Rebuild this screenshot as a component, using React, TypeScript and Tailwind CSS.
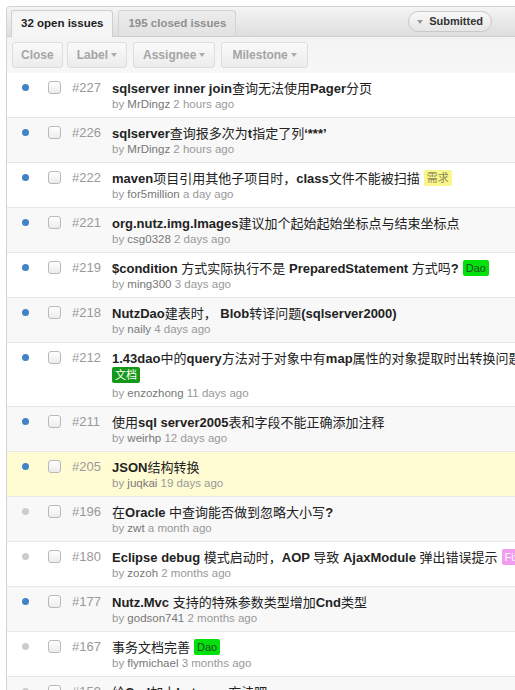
import React from 'react';

type Label = { text: string; cls: string };
type Issue = {
  num: number;
  title: string;
  author: string;
  when: string;
  open?: boolean;
  label?: Label;
  labelBelow?: boolean;
  highlight?: boolean;
};

const yellow = 'bg-[#fbf68b] text-[#8a8a5a]';
const lime = 'bg-[#02e10c] text-[#1f4f1f]';
const green = 'bg-[#159818] text-white';
const pink = 'bg-[#f29cf0] text-white';

const issues: Issue[] = [
  { num: 227, title: 'sqlserver inner join查询无法使用Pager分页', author: 'MrDingz', when: '2 hours ago', open: true },
  { num: 226, title: 'sqlserver查询报多次为t指定了列‘***’', author: 'MrDingz', when: '2 hours ago', open: true },
  { num: 222, title: 'maven项目引用其他子项目时，class文件不能被扫描', author: 'for5million', when: 'a day ago', open: true, label: { text: '需求', cls: yellow } },
  { num: 221, title: 'org.nutz.img.Images建议加个起始起始坐标点与结束坐标点', author: 'csg0328', when: '2 days ago', open: true },
  { num: 219, title: '$condition 方式实际执行不是 PreparedStatement 方式吗?', author: 'ming300', when: '3 days ago', open: true, label: { text: 'Dao', cls: lime } },
  { num: 218, title: 'NutzDao建表时， Blob转译问题(sqlserver2000)', author: 'naily', when: '4 days ago', open: true },
  { num: 212, title: '1.43dao中的query方法对于对象中有map属性的对象提取时出转换问题', author: 'enzozhong', when: '11 days ago', open: true, label: { text: '文档', cls: green }, labelBelow: true },
  { num: 211, title: '使用sql server2005表和字段不能正确添加注释', author: 'weirhp', when: '12 days ago', open: true },
  { num: 205, title: 'JSON结构转换', author: 'juqkai', when: '19 days ago', open: true, highlight: true },
  { num: 196, title: '在Oracle 中查询能否做到忽略大小写?', author: 'zwt', when: 'a month ago' },
  { num: 180, title: 'Eclipse debug 模式启动时，AOP 导致 AjaxModule 弹出错误提示', author: 'zozoh', when: '2 months ago', label: { text: 'Fixed', cls: pink } },
  { num: 177, title: 'Nutz.Mvc 支持的特殊参数类型增加Cnd类型', author: 'godson741', when: '2 months ago', open: true },
  { num: 167, title: '事务文档完善', author: 'flymichael', when: '3 months ago', label: { text: 'Dao', cls: lime } },
  { num: 159, title: '给Cnd加上between方法吧', author: 'wendal', when: '3 months ago' },
];

const font = { fontFamily: '"Liberation Sans", "Noto Sans CJK SC", sans-serif' };

// latin runs are bold, CJK runs fall back to a regular face like the original
function Title({ text }: { text: string }) {
  const parts = text.split(/([\u3000-\u303f\u4e00-\u9fff\uff00-\uffef]+)/).filter(Boolean);
  return (
    <>
      {parts.map((p, i) =>
        /[\u3000-\u303f\u4e00-\u9fff\uff00-\uffef]/.test(p) ? (
          <span key={i} className="font-normal text-[13px]">{p}</span>
        ) : (
          <span key={i} className="font-bold text-[13px]">{p}</span>
        )
      )}
    </>
  );
}

function Tag({ label }: { label: Label }) {
  return (
    <span className={`ml-[4px] px-[3px] rounded-[2px] text-[11px] leading-[16px] h-[16px] font-normal ${label.cls}`}>
      {label.text}
    </span>
  );
}

function Caret() {
  return <span className="inline-block ml-[3px] border-x-[3px] border-x-transparent border-t-[4px] border-t-[#aaa]" />;
}

function ToolButton({ children, className = '' }: { children: React.ReactNode; className?: string }) {
  return (
    <div className={`h-[26px] flex items-center rounded-[3px] border border-[#ddd] bg-gradient-to-b from-[#fafafa] to-[#ececec] text-[12px] font-bold text-[#a5a5a5] ${className}`}>
      {children}
    </div>
  );
}

function Row({ issue, index }: { issue: Issue; index: number }) {
  const bg = issue.highlight ? 'bg-[#fffcd3]' : index % 2 === 1 ? 'bg-[#f8f8f8]' : 'bg-white';
  return (
    <div className={`flex border-b border-[#e6e6e6] pt-[6px] pb-[4px] ${bg}`}>
      <div className="w-[36px] h-[17px] flex items-center pl-[15px]">
        <span className={`w-[7px] h-[7px] rounded-full ${issue.open ? 'bg-[#4183c4]' : 'bg-[#cccccc]'}`} />
      </div>
      <div className="w-[29px] h-[17px] flex items-center pl-[5px]">
        <span className="w-[13px] h-[13px] rounded-[3px] border border-[#b9b9b9] bg-gradient-to-b from-white to-[#ececec]" />
      </div>
      <div className="w-[40px] h-[17px] flex items-center text-[13px] text-[#999]">#{issue.num}</div>
      <div className="flex-1 min-w-0">
        <div className="h-[17px] flex items-center whitespace-nowrap text-[#222]">
          <span className="leading-[17px]">
            <Title text={issue.title} />
          </span>
          {issue.label && !issue.labelBelow && <Tag label={issue.label} />}
        </div>
        {issue.label && issue.labelBelow && (
          <div className="h-[19px] flex items-start pt-[1px]">
            <span className={`px-[3px] rounded-[2px] text-[11px] leading-[16px] h-[16px] ${issue.label.cls}`}>{issue.label.text}</span>
          </div>
        )}
        <div className="h-[17px] leading-[17px] text-[11.5px] text-[#999] whitespace-nowrap">
          by <span className="text-[#777]">{issue.author}</span> {issue.when}
        </div>
      </div>
    </div>
  );
}

export default function App() {
  return (
    <div className="w-[515px] h-[690px] overflow-hidden bg-white pt-[6px] pl-[6px]" style={font}>
      <div className="w-[620px] border-l border-t border-[#d3d3d3] rounded-tl-[4px] overflow-hidden">
        <div className="h-[30px] flex items-end pl-[4px] bg-gradient-to-b from-[#f4f4f4] to-[#dedede] border-b border-[#cfcfcf] w-[509px]">
          <div className="h-[27px] -mb-px px-[9px] flex items-center rounded-t-[3px] border border-b-0 border-[#cfcfcf] bg-[#f5f5f5] text-[11.5px] font-bold text-[#222]">
            32 open issues
          </div>
          <div className="h-[26px] ml-[5px] px-[9px] flex items-center rounded-t-[3px] border border-b-0 border-[#d3d3d3] bg-gradient-to-b from-[#ececec] to-[#e2e2e2] text-[11.5px] font-bold text-[#909090]">
            195 closed issues
          </div>
          <div className="ml-auto mr-[24px] mb-[4px] h-[21px] px-[8px] flex items-center gap-[6px] rounded-full border border-[#c8c8c8] bg-gradient-to-b from-[#f8f8f8] to-[#e6e6e6] text-[11px] font-bold text-[#333]">
            <span className="inline-block border-x-[3px] border-x-transparent border-t-[4px] border-t-[#999]" />
            Submitted
          </div>
        </div>
        <div className="h-[36px] flex items-center pl-[5px] bg-gradient-to-b from-[#f3f3f3] to-[#f7f7f7]">
          <ToolButton className="px-[8px]">Close</ToolButton>
          <ToolButton className="ml-[4px] px-[9px]">
            Label
            <Caret />
          </ToolButton>
          <ToolButton className="ml-[6px] px-[9px]">
            Assignee
            <Caret />
          </ToolButton>
          <ToolButton className="ml-[6px] px-[10px]">
            Milestone
            <Caret />
          </ToolButton>
        </div>
        {issues.map((issue, i) => (
          <Row key={issue.num} issue={issue} index={i} />
        ))}
      </div>
    </div>
  );
}
